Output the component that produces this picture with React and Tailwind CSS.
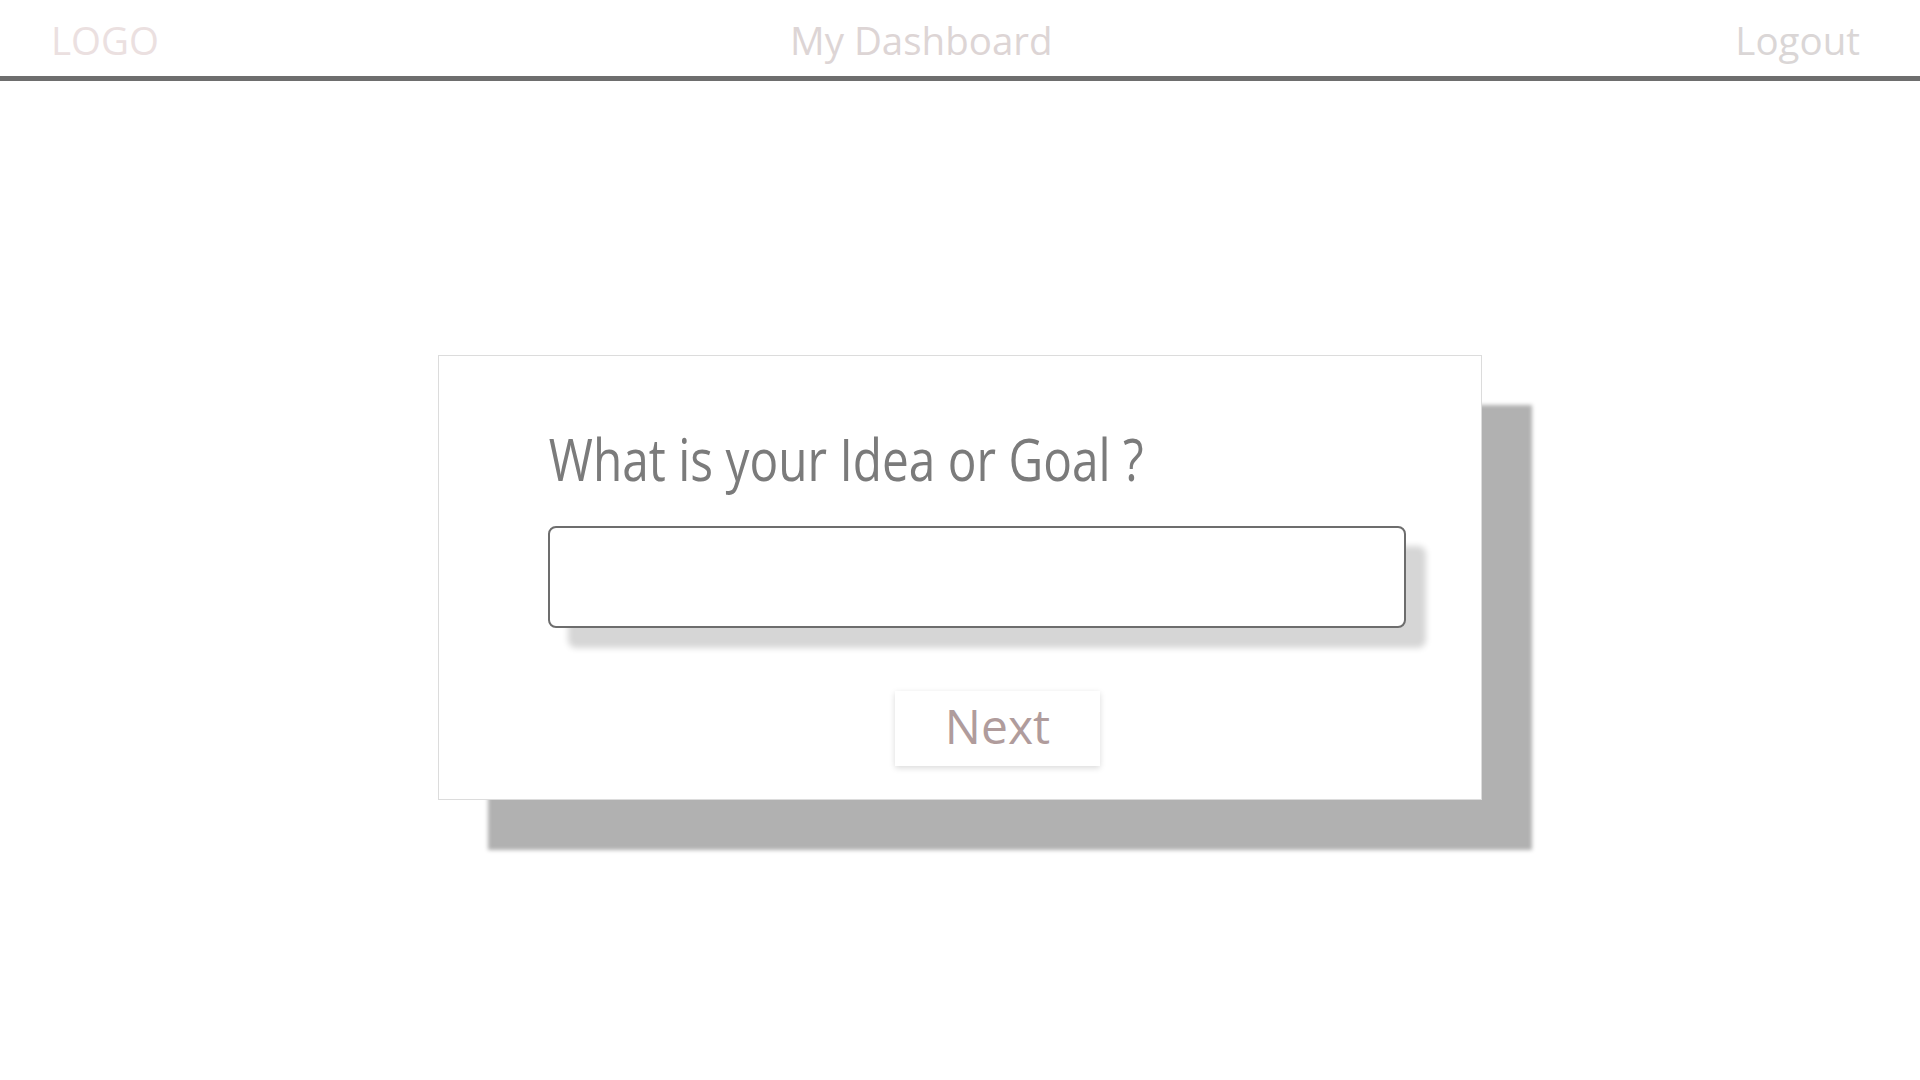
import React, { useState } from "react";

const App = () => {
  const [idea, setIdea] = useState("");

  return (
    <div className="min-h-screen bg-white font-['Open_Sans',sans-serif]">
      {/* Top bar */}
      <header className="flex h-[81px] pt-[14px] border-b-[5px] border-[#6e6e6e] text-[38.5px] leading-[normal]">
        <div className="w-[790px] pl-[51px] text-[#ebe0e0]">LOGO</div>
        <div className="text-[#ddd5d5]">My Dashboard</div>
        <div className="ml-auto pr-[60px] text-[#dad6d6]">Logout</div>
      </header>

      {/* Idea card */}
      <div className="mt-[274px] mx-auto w-[1044px] h-[445px] bg-white border border-[#dcdcdc] shadow-[50px_50px_4px_#b1b1b1]">
        <div className="flex flex-col pl-[109px] pt-[62px]">
          <h1 className="h-[80px] text-[59px] leading-[80px] font-normal text-[#7b7b7b] whitespace-nowrap">
            <span className="inline-block origin-left scale-x-[0.81] pl-[1px]">
              What is your Idea or Goal ?
            </span>
          </h1>
          <input
            type="text"
            value={idea}
            onChange={(e) => setIdea(e.target.value)}
            className="mt-[28px] w-[858px] h-[102px] rounded-[8px] border-2 border-[#6d6d6d] bg-white px-4 text-[30px] text-[#555] outline-none shadow-[20px_20px_6px_#d6d6d6]"
          />
          <button
            type="button"
            className="mt-[63px] ml-[347px] flex items-center justify-center w-[205px] h-[75px] pb-[6px] bg-white text-[48px] leading-[normal] font-normal text-[#b09c9c] shadow-[0_2px_6px_rgba(0,0,0,0.15)]"
          >
            Next
          </button>
        </div>
      </div>
    </div>
  );
};

export default App;
